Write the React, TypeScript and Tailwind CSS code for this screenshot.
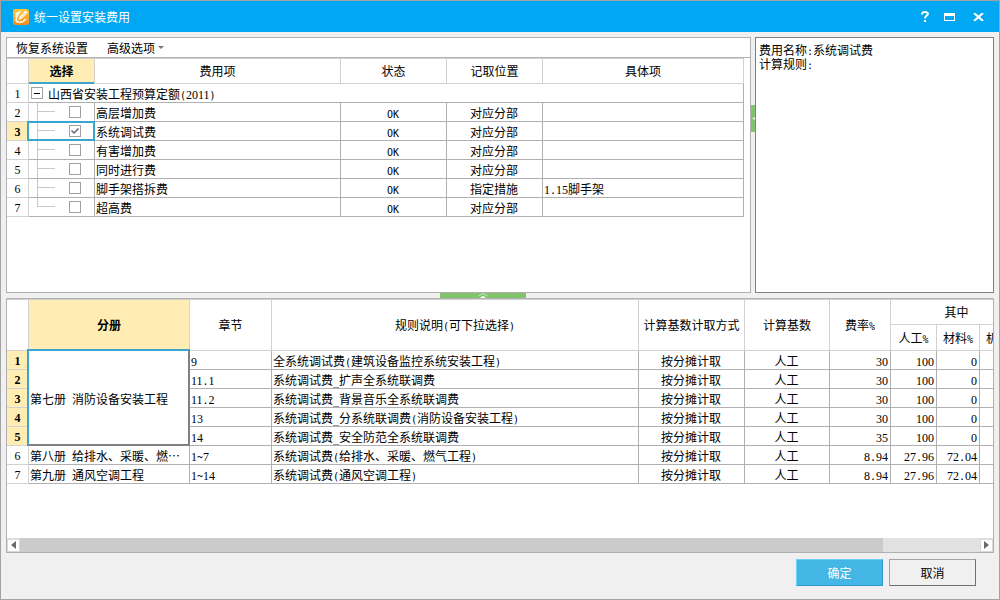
import React from "react";

const RUNS = /([0-9]+|[\x20-\x2f\x3a-\x7e]+)/;

/** Half-width characters are set in faces half as wide as a full-width one. */
function Mixed({ text }: { text: string }) {
  return (
    <>
      {text.split(RUNS).map((part, i) => {
        if (i % 2 === 0) return part;
        return /^[0-9]/.test(part) ? (
          <span key={i} className="font-['Liberation_Serif',serif] text-xs leading-none">
            {part}
          </span>
        ) : (
          <span key={i} className="font-['DejaVu_Sans_Mono',monospace] text-[10px] leading-none whitespace-pre">
            {part}
          </span>
        );
      })}
    </>
  );
}

const HEAD = "border-r border-b border-[#d2d2d2] p-0 font-normal";
const CELL =
  "h-[19px] border-r border-b border-[#b0b0b0] pt-[2px] pr-[2px] pb-0 pl-px whitespace-nowrap overflow-hidden";

function RowNo({ n, active }: { n: number; active?: boolean }) {
  return (
    <th
      scope="row"
      className={
        active
          ? "h-[19px] border-r border-b border-[#d2d2d2] bg-[#ffedb3] p-0 text-center font-bold"
          : "h-[19px] border-r border-b border-[#d2d2d2] p-0 text-center font-normal"
      }
    >
      <Mixed text={String(n)} />
    </th>
  );
}

const fees = [
  { name: "高层增加费", place: "对应分部", item: "" },
  { name: "系统调试费", place: "对应分部", item: "" },
  { name: "有害增加费", place: "对应分部", item: "" },
  { name: "同时进行费", place: "对应分部", item: "" },
  { name: "脚手架搭拆费", place: "指定措施", item: "1.15脚手架" },
  { name: "超高费", place: "对应分部", item: "" },
];

const rules = [
  ["9", "全系统调试费(建筑设备监控系统安装工程)", "30", "100", "0"],
  ["11.1", "系统调试费_扩声全系统联调费", "30", "100", "0"],
  ["11.2", "系统调试费_背景音乐全系统联调费", "30", "100", "0"],
  ["13", "系统调试费_分系统联调费(消防设备安装工程)", "30", "100", "0"],
  ["14", "系统调试费_安全防范全系统联调费", "35", "100", "0"],
  ["1~7", "系统调试费(给排水、采暖、燃气工程)", "8.94", "27.96", "72.04"],
  ["1~14", "系统调试费(通风空调工程)", "8.94", "27.96", "72.04"],
];

const volumes: Record<number, string> = {
  0: "第七册 消防设备安装工程",
  5: "第八册 给排水、采暖、燃…",
  6: "第九册 通风空调工程",
};

function TitleBar() {
  return (
    <header className="flex h-[31px] shrink-0 items-center bg-[#00a8f3] pr-[14px] pl-3 text-white">
      <svg width="16" height="16" viewBox="0 0 16 16" aria-hidden="true">
        <defs>
          <linearGradient id="badge" x1="0" y1="0" x2="0" y2="1">
            <stop offset="0" stopColor="#ffc83c" />
            <stop offset="1" stopColor="#f58a1f" />
          </linearGradient>
        </defs>
        <rect width="16" height="16" rx="2.5" fill="url(#badge)" />
        <path d="M1.500 4.500 5 2.500 8.500 2 6 5.500 4.500 8.500 4 11.500 6 12.500 9.500 12 12 9.500 13.500 10 11 13 7 14.200 3.500 13.500 2 11 3 8 1.500 7.500 3.500 5z" fill="#fff6dc" />
        <path d="M5.500 11 6.300 8 12.500 1.500l2.200 2L8.500 10z" fill="#fff" />
        <path d="M7.400 9.300 13 3.500" stroke="#f7a52c" strokeWidth=".6" />
      </svg>
      <h1 className="ml-[5px] flex-1 text-xs">统一设置安装费用</h1>
      <div className="flex items-center gap-[11px]">
        <button type="button" aria-label="帮助" className="grid h-4 w-[14px] place-items-center">
          <svg width="8" height="11" viewBox="0 0 8 11" fill="none" stroke="#fff" strokeWidth="2">
            <path d="M1 3.500V2.500Q1.500 1 4 1T7 2.800C7 4.500 4 4.700 4 7.500M4 9v2" />
          </svg>
        </button>
        <button type="button" aria-label="最大化" className="grid h-4 w-[12px] place-items-center">
          <svg width="11" height="8" viewBox="0 0 11 8">
            <path d="M0 0h11v8H0zM1 3v4h9V3z" fill="#fff" fillRule="evenodd" />
          </svg>
        </button>
        <button type="button" aria-label="关闭" className="ml-[5px] grid h-4 w-[14px] place-items-center">
          <svg width="11" height="8" viewBox="0 0 11 8" stroke="#fff" strokeWidth="2.200">
            <path d="M1 0 10 8M10 0 1 8" />
          </svg>
        </button>
      </div>
    </header>
  );
}

function FeeTable() {
  return (
    <table className="w-full table-fixed border-separate border-spacing-0">
      <colgroup>
        <col className="w-[22px]" />
        <col className="w-[66px]" />
        <col className="w-[246px]" />
        <col className="w-[106px]" />
        <col className="w-[96px]" />
        <col />
      </colgroup>
      <thead>
        <tr className="h-[26px]">
          <td className={`${HEAD} border-t`} />
          <th className={`${HEAD} relative border-t bg-[#ffedb3]`}>
            <span className="font-bold">选择</span>
            <span className="absolute inset-x-0 -bottom-px h-[2px] bg-[#3ba5d2]" />
          </th>
          <th className={`${HEAD} border-t`}>费用项</th>
          <th className={`${HEAD} border-t`}>状态</th>
          <th className={`${HEAD} border-t`}>记取位置</th>
          <th className={`${HEAD} border-t`}>具体项</th>
        </tr>
      </thead>
      <tbody>
        <tr>
          <RowNo n={1} />
          <td colSpan={5} className={CELL}>
            <div className="flex h-[14px] items-start gap-[5px] pl-px">
              <button
                type="button"
                aria-label="折叠"
                className="grid size-3 place-items-center border border-[#a0a0a0] bg-white"
              >
                <span className="h-px w-[6px] bg-black" />
              </button>
              <span>
                <Mixed text="山西省安装工程预算定额(2011)" />
              </span>
            </div>
          </td>
        </tr>
        {fees.map((fee, i) => (
          <tr key={fee.name}>
            <RowNo n={i + 2} active={i === 1} />
            <td className="relative h-[19px] border-r border-b border-[#b0b0b0] p-0">
              <div className="flex h-[18px] items-start pl-2">
                <svg width="18" height="18" viewBox="0 0 18 18" stroke="#c8c8c8" aria-hidden="true">
                  <path d={i === fees.length - 1 ? "M.5 0V9M0 8.500H18" : "M.5 0V18M0 8.500H18"} fill="none" />
                </svg>
                <span className="relative mt-[3px] ml-[14px] block size-3">
                  <input
                    type="checkbox"
                    aria-label={fee.name}
                    defaultChecked={i === 1}
                    className="peer block size-3 appearance-none border border-[#a0a0a0] bg-white"
                  />
                  <svg
                    viewBox="0 0 12 12"
                    className="pointer-events-none absolute inset-0 hidden size-3 peer-checked:block"
                    fill="none"
                    stroke="#666675"
                    strokeWidth="1.500"
                  >
                    <path d="M2.500 5.500 5 8l4.500-4.500" />
                  </svg>
                </span>
              </div>
              {i === 1 && (
                <span className="pointer-events-none absolute -top-px -right-px -bottom-px -left-[2px] z-10 border-2 border-[#3ba5d2]" />
              )}
            </td>
            <td className={CELL}>{fee.name}</td>
            <td className={`${CELL} text-center`}>
              <Mixed text="OK" />
            </td>
            <td className={`${CELL} text-center`}>{fee.place}</td>
            <td className={CELL}>
              <Mixed text={fee.item} />
            </td>
          </tr>
        ))}
      </tbody>
    </table>
  );
}

function RuleTable() {
  return (
    <table className="w-[1016px] table-fixed border-separate border-spacing-0">
      <colgroup>
        <col className="w-[22px]" />
        <col className="w-[161px]" />
        <col className="w-[82px]" />
        <col className="w-[367px]" />
        <col className="w-[106px]" />
        <col className="w-[85px]" />
        <col className="w-[61px]" />
        <col className="w-[46px]" />
        <col className="w-[43px]" />
        <col className="w-[43px]" />
      </colgroup>
      <thead>
        <tr className="h-[26px]">
          <td rowSpan={2} className={`${HEAD} border-t`} />
          <th rowSpan={2} className={`${HEAD} border-t bg-[#ffedb3]`}>
            <span className="font-bold">分册</span>
          </th>
          <th rowSpan={2} className={`${HEAD} border-t`}>章节</th>
          <th rowSpan={2} className={`${HEAD} border-t`}>
            <Mixed text="规则说明(可下拉选择)" />
          </th>
          <th rowSpan={2} className={`${HEAD} border-t`}>计算基数计取方式</th>
          <th rowSpan={2} className={`${HEAD} border-t`}>计算基数</th>
          <th rowSpan={2} className={`${HEAD} border-t`}>
            <Mixed text="费率%" />
          </th>
          <th colSpan={3} className={`${HEAD} border-t`}>其中</th>
        </tr>
        <tr className="h-[26px]">
          {["人工%", "材料%", "机械%"].map((name) => (
            <th key={name} className={HEAD}>
              <Mixed text={name} />
            </th>
          ))}
        </tr>
      </thead>
      <tbody>
        {rules.map(([chapter, rule, rate, labour, material], i) => (
          <tr key={chapter}>
            <RowNo n={i + 1} active={i < 5} />
            {i === 0 && (
              <td rowSpan={5} className="relative border-r border-b border-[#b0b0b0] pt-[2px] pr-[2px] pb-0 pl-px">
                <Mixed text={volumes[0]} />
                <span className="pointer-events-none absolute -top-[2px] -right-px -bottom-px -left-[2px] border-2 border-t-[#3ba5d2] border-r-[#808080] border-b-[#808080] border-l-[#3ba5d2]" />
              </td>
            )}
            {i > 4 && (
              <td className={CELL}>
                <Mixed text={volumes[i]} />
              </td>
            )}
            <td className={CELL}>
              <Mixed text={chapter} />
            </td>
            <td className={CELL}>
              <Mixed text={rule} />
            </td>
            <td className={`${CELL} text-center`}>按分摊计取</td>
            <td className={`${CELL} text-center`}>人工</td>
            {[rate, labour, material].map((value, k) => (
              <td key={k} className={`${CELL} text-right`}>
                <Mixed text={value} />
              </td>
            ))}
            <td className={CELL} />
          </tr>
        ))}
      </tbody>
    </table>
  );
}

function ScrollBar() {
  const end = "grid h-[13px] w-[13px] shrink-0 place-items-center border border-[#d8d8d8] bg-white";
  return (
    <div className="flex h-[14px] shrink-0 items-center bg-[#e1e1e1]">
      <button type="button" aria-label="向左滚动" className={end}>
        <svg width="5" height="8" viewBox="0 0 5 8">
          <path d="M5 0v8L0 4z" fill="#6b6b78" />
        </svg>
      </button>
      <div className="flex flex-1 pr-[97px]">
        <div className="h-[14px] flex-1 bg-[#cbcbcb]" />
      </div>
      <button type="button" aria-label="向右滚动" className={end}>
        <svg width="5" height="8" viewBox="0 0 5 8">
          <path d="M0 0v8l5-4z" fill="#6b6b78" />
        </svg>
      </button>
    </div>
  );
}

export default function App() {
  return (
    <div
      lang="zh-CN"
      className="flex min-h-screen flex-col border border-[#a3a3a3] bg-[#f0f0f0] font-['Noto_Sans_CJK_SC',sans-serif] text-xs leading-[14px] text-black"
    >
      <TitleBar />
      <main className="flex flex-1 flex-col px-[5px] pt-[5px]">
        <div className="flex min-h-[256px]">
          <section className="min-w-0 flex-1 border border-[#b0b0b0] bg-white">
            <nav className="flex h-5 items-center gap-[19px] border-b border-[#b0b0b0] pl-[9px]">
              <button type="button">恢复系统设置</button>
              <button type="button" className="flex items-center gap-[3px]">
                高级选项
                <svg width="6" height="3" viewBox="0 0 6 3" aria-hidden="true">
                  <path d="M0 0h6L3 3z" fill="#777785" />
                </svg>
              </button>
            </nav>
            <div className="pr-[6px]">
              <FeeTable />
            </div>
          </section>
          <div className="w-1 shrink-0 pt-[68px]">
            <div className="grid h-[27px] place-items-center bg-[#82c46c]">
              <svg width="3" height="3" viewBox="0 0 3 3" aria-hidden="true">
                <path d="M0 1.500 3 0v3z" fill="#e6f4e1" />
              </svg>
            </div>
          </div>
          <aside className="w-[239px] shrink-0 border border-[#808080] bg-white px-[3px] pt-[5px]">
            <p className="h-[14px]">
              <Mixed text="费用名称:系统调试费" />
            </p>
            <p className="h-[14px]">
              <Mixed text="计算规则:" />
            </p>
          </aside>
        </div>
        <div className="flex h-[5px] shrink-0 justify-center pr-[34px]">
          <div className="grid w-[86px] place-items-center bg-[#82c46c]">
            <svg width="10" height="5" viewBox="0 0 10 5" aria-hidden="true">
              <path d="M.5 3 5 .500 9.500 3" fill="none" stroke="#c8e6be" />
              <path d="M2 5 5 2.800 8 5z" fill="#fff" />
            </svg>
          </div>
        </div>
        <section className="flex flex-1 flex-col border border-[#b0b0b0] bg-white">
          <div className="flex-1 overflow-hidden">
            <RuleTable />
          </div>
          <ScrollBar />
        </section>
      </main>
      <footer className="flex shrink-0 justify-end gap-[6px] pt-[6px] pr-[23px] pb-[13px]">
        <button
          type="button"
          className="h-[27px] w-[87px] border border-t-[#6bd0f5] border-r-[#2a9ccb] border-b-[#2a9ccb] border-l-[#6bd0f5] bg-[#43b6e5] text-white"
        >
          确定
        </button>
        <button
          type="button"
          className="h-[27px] w-[87px] border border-t-[#a3a3a3] border-r-[#707070] border-b-[#707070] border-l-[#a3a3a3] bg-[#f0f0f0]"
        >
          取消
        </button>
      </footer>
    </div>
  );
}
